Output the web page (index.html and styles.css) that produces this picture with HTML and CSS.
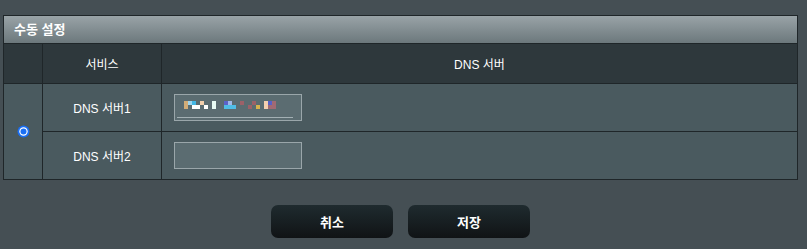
FILE: index.html
```html
<!DOCTYPE html>
<html lang="ko">
<head>
    <meta charset="UTF-8">
    <title>수동 설정</title>
    <link rel="stylesheet" href="styles.css">
</head>
<body>
    <div class="panel">
        <div class="panel-title">수동 설정</div>
        <table class="dns-table">
            <thead>
                <tr>
                    <th class="col-radio"></th>
                    <th class="col-service">서비스</th>
                    <th>DNS 서버</th>
                </tr>
            </thead>
            <tbody>
                <tr>
                    <td rowspan="2" class="radio-cell">
                        <svg class="radio" width="13" height="13" viewBox="0 0 13 13">
                            <circle cx="6.5" cy="6.5" r="6" fill="#1a6ff5"/>
                            <circle cx="6.5" cy="6.5" r="4.2" fill="#ffffff"/>
                            <circle cx="6.5" cy="6.5" r="3" fill="#1a6ff5"/>
                        </svg>
                    </td>
                    <td class="label">DNS 서버1</td>
                    <td class="field">
                        <div class="text-box filled">
                            <svg class="mosaic" width="96" height="12" viewBox="0 0 96 12">
                                <rect x="0" y="0" width="4" height="8" fill="#d3ad78"/>
                                <rect x="4" y="0" width="4" height="4" fill="#9ed6f0"/>
                                <rect x="8" y="0" width="4" height="4" fill="#43b8e6"/>
                                <rect x="8" y="4" width="8" height="4" fill="#ffffff"/>
                                <rect x="16" y="0" width="4" height="4" fill="#f2cfac"/>
                                <rect x="20" y="4" width="4" height="4" fill="#ffffff"/>
                                <rect x="28" y="0" width="4" height="8" fill="#e8fbf4"/>
                                <rect x="40" y="0" width="4" height="4" fill="#5b63c9"/>
                                <rect x="44" y="0" width="4" height="4" fill="#9fb8e8"/>
                                <rect x="40" y="4" width="12" height="4" fill="#4fbde6"/>
                                <rect x="56" y="0" width="4" height="4" fill="#9c6168"/>
                                <rect x="64" y="4" width="4" height="4" fill="#9c6168"/>
                                <rect x="68" y="0" width="4" height="4" fill="#9c6168"/>
                                <rect x="72" y="4" width="4" height="4" fill="#d8b24e"/>
                                <rect x="80" y="0" width="4" height="8" fill="#f5d0b0"/>
                                <rect x="84" y="0" width="4" height="4" fill="#5761c9"/>
                                <rect x="84" y="4" width="4" height="4" fill="#a06a74"/>
                                <rect x="88" y="0" width="4" height="8" fill="#a06a74"/>
                            </svg>
                            <span class="underline"></span>
                        </div>
                    </td>
                </tr>
                <tr>
                    <td class="label">DNS 서버2</td>
                    <td class="field">
                        <div class="text-box"></div>
                    </td>
                </tr>
            </tbody>
        </table>
    </div>

    <div class="actions">
        <button class="btn">취소</button>
        <button class="btn">저장</button>
    </div>
</body>
</html>
```

FILE: styles.css
```css
body {
    margin: 0;
    padding: 15px 10px 0 3px;
    background-color: #454f54;
    font-family: "Liberation Sans", "Noto Sans CJK KR", sans-serif;
    color: #ffffff;
}
.panel {
    width: 795px;
}
.panel-title {
    height: 27px;
    line-height: 27px;
    padding-left: 10px;
    border: 1px solid #1f2629;
    border-bottom: none;
    background: linear-gradient(to bottom, #99a3a7, #6c787c);
    font-size: 13px;
    font-weight: bold;
}
.dns-table {
    width: 100%;
    border-collapse: collapse;
    font-size: 12px;
}
.dns-table th,
.dns-table td {
    border: 1px solid #1f2629;
    text-align: center;
    padding: 0;
}
.dns-table th {
    height: 39px;
    background-color: #2e383c;
    font-weight: normal;
}
.dns-table td {
    height: 47px;
    background-color: #4a5a5f;
}
.col-radio {
    width: 38px;
}
.col-service {
    width: 118px;
}
.radio {
    display: block;
    margin: 0 auto;
}
.dns-table td.field {
    text-align: left;
    padding-left: 12px;
}
.text-box {
    position: relative;
    width: 126px;
    height: 25px;
    border: 1px solid #9aa6aa;
    background-color: #5b6c71;
}
.mosaic {
    display: block;
    margin: 6px 0 0 9px;
}
.underline {
    position: absolute;
    left: 2px;
    right: 8px;
    bottom: 2px;
    height: 1px;
    background-color: #a3b0b4;
}
.actions {
    display: flex;
    justify-content: center;
    gap: 15px;
    padding-top: 25px;
    width: 795px;
}
.btn {
    width: 122px;
    height: 33px;
    border: none;
    border-radius: 7px;
    background: linear-gradient(to bottom, #1f2b2f, #101315);
    color: #ffffff;
    font-family: "Liberation Sans", "Noto Sans CJK KR", sans-serif;
    font-size: 13px;
    font-weight: bold;
}
```
